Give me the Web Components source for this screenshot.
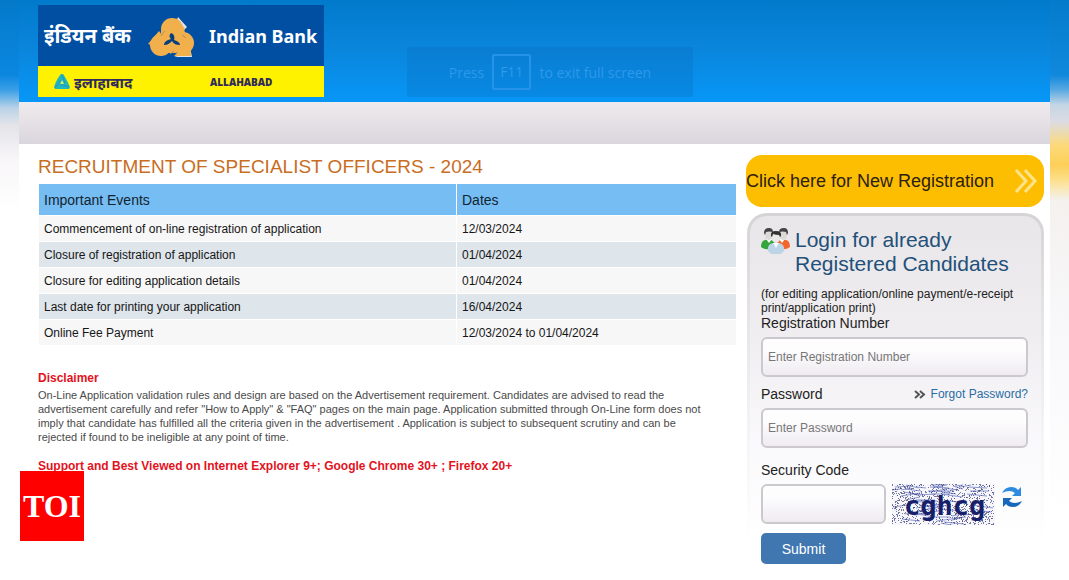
<!DOCTYPE html>
<html lang="en">
<head>
<meta charset="utf-8">
<title>Recruitment of Specialist Officers - 2024</title>
<style>
body { margin: 0; background: #fff; color: #222; font-family: "Liberation Sans", Arial, sans-serif; }
</style>
</head>
<body>
<recruitment-page></recruitment-page>

<script>
const define = (name, html, setup) => {
  const template = document.createElement('template');
  template.innerHTML = html;
  customElements.define(name, class extends HTMLElement {
    constructor() {
      super();
      this.attachShadow({ mode: 'open' }).append(template.content.cloneNode(true));
    }
    connectedCallback() { if (setup) setup(this, this.shadowRoot); }
  });
};

define('bank-logo', `
<style>
:host { display: block; width: 286px; color: #fff; font-family: "Noto Sans", "Noto Sans Devanagari", sans-serif; font-weight: 700; }
.top, .bottom { display: grid; grid-template-columns: 106px 65px 1fr; align-items: center; white-space: nowrap; }
.top { height: 61px; background: #004fa2; font-size: 18px; }
.bottom { height: 31px; background: #fff200; color: #2f2b5c; }
.hi { padding-left: 6px; font-size: 20px; }
.old { grid-column: 1 / 3; display: flex; align-items: center; gap: 4px; padding-left: 16px; font-size: 15px; }
.alla { font-size: 10px; font-family: "Open Sans", sans-serif; font-weight: 800; padding-left: 1px; }
svg { display: block; }
</style>
<div class="top">
  <span class="hi" lang="hi">इंडियन बैंक</span>
  <svg width="52" height="44" viewBox="0 0 52 44">
    <g fill="#dfe5ea"><path d="M34 3l9 10-4 4-7-8zM47 38l1 5H30z"/></g>
    <g fill="#f2b04c">
      <circle cx="28" cy="15" r="11"/><circle cx="17" cy="31" r="11"/><circle cx="39" cy="29" r="11"/>
      <path d="M18 14l20-2 6 12v10l-12 5H18l-4-9z"/>
      <path d="M33 4l8 11-2 4H27zM4 30l11-13 8 12-9 4zM33 30l14 6v6H30l4-4z"/>
    </g>
    <path d="M27 19c3 1 4 4 3 7 4 1 6 3 6 5-4 0-6-1-8-4-2 2-4 4-8 4 0-3 3-5 7-6-2-2-2-4 0-6z" fill="#063f7e"/>
    <path d="M17 22q1-3 4-5M26 40l4-3M38 21l4 3" stroke="#b98a50" fill="none"/>
  </svg>
  <span>Indian Bank</span>
</div>
<div class="bottom">
  <span class="old" lang="hi">
    <svg width="16" height="15" viewBox="0 0 16 15"><path d="M7 0h2q3 4 7 13l-1 2H1l-1-2Q3 4 7 0z" fill="#21b6bd"/><path d="M8 6l2 4H6z" fill="#d3f06a"/><path d="M8 1l3 8M1 14l6-8M15 13l-9-3" fill="none" stroke="#1686b0" stroke-opacity=".6"/></svg>
    इलाहाबाद
  </span>
  <span class="alla">ALLAHABAD</span>
</div>`);

define('fullscreen-hint', `
<style>
:host { display: flex; align-items: center; justify-content: center; gap: 8px; width: 286px; height: 50px;
  background: rgba(10, 110, 190, .3); color: #2f99ea; font: 14px "Open Sans", sans-serif; white-space: nowrap; }
kbd { font: inherit; border: 2px solid #2593ea; border-radius: 2px; padding: 6px; line-height: 20px; }
</style>
<span>Press</span><kbd>F11</kbd><span>to exit full screen</span>`);

define('site-header', `
<style>
:host { display: block; position: relative; }
.banner { height: 97px; padding: 5px 19px 0; background: linear-gradient(#017acb, #0a86dd 50%, #0797f7); }
.bar { height: 42px; background: linear-gradient(#efebed, #dad6dd); }
fullscreen-hint { position: absolute; left: 388px; top: 47px; }
</style>
<div class="banner"><bank-logo></bank-logo></div>
<div class="bar"></div>
<fullscreen-hint></fullscreen-hint>`);

define('events-table', `
<style>
:host { display: block; }
table { width: 100%; border-spacing: 1px; table-layout: fixed; font-size: 12px; color: #161616; }
th { background: #76bdf3; font-size: 14px; font-weight: 400; height: 31px; color: #122431; }
td { height: 25px; background: #f7f7f8; }
th, td { padding: 0 5px; text-align: left; }
th:first-child { width: 407px; }
tr:nth-child(even) td { background: #dee5eb; }
</style>
<table>
  <thead><tr><th scope="col">Important Events</th><th scope="col">Dates</th></tr></thead>
  <tbody>
    <tr><td>Commencement of on-line registration of application</td><td>12/03/2024</td></tr>
    <tr><td>Closure of registration of application</td><td>01/04/2024</td></tr>
    <tr><td>Closure for editing application details</td><td>01/04/2024</td></tr>
    <tr><td>Last date for printing your application</td><td>16/04/2024</td></tr>
    <tr><td>Online Fee Payment</td><td>12/03/2024 to 01/04/2024</td></tr>
  </tbody>
</table>`);

define('disclaimer-note', `
<style>
:host { display: block; font-size: 12px; }
h2 { margin: 0; font-size: 12px; line-height: 20px; color: #e3131d; }
p { margin: 0; padding-right: 24px; font-size: 11px; line-height: 14px; color: #4a4a4a; }
strong { display: block; margin-top: 15px; line-height: 14px; color: #e3131d; }
</style>
<h2>Disclaimer</h2>
<p>On-Line Application validation rules and design are based on the Advertisement requirement. Candidates are advised to read the advertisement carefully and refer "How to Apply" &amp; "FAQ" pages on the main page. Application submitted through On-Line form does not imply that candidate has fulfilled all the criteria given in the advertisement . Application is subject to subsequent scrutiny and can be rejected if found to be ineligible at any point of time.</p>
<strong>Support and Best Viewed on Internet Explorer 9+; Google Chrome 30+ ; Firefox 20+</strong>`);

define('register-link', `
<style>
:host { display: block; }
a { display: flex; align-items: center; justify-content: space-between; height: 52px; padding-right: 6px; border-radius: 16px;
  background: #fdbe02; color: #2b2110; font-size: 18px; text-decoration: none; white-space: nowrap; }
</style>
<a href="#register"><span><slot></slot></span>
<svg width="24" height="24" viewBox="0 0 24 24" fill="none" stroke="#ffe38c" stroke-width="3"><path d="M2 1l10 11L2 23M11 1l10 11-10 11"/></svg></a>`);

define('text-field', `
<style>
:host { display: block; }
.head { display: flex; justify-content: space-between; align-items: center; line-height: 17px; }
label { font-size: 14px; color: #222; }
.row { display: flex; gap: 6px; margin-top: 5px; }
input { box-sizing: border-box; width: 100%; height: 40px; padding: 0 5px; border: 2px solid #cbc8ce; border-radius: 6px;
  background: linear-gradient(#fefdfe 30%, #efebf1); font: 12px "Liberation Sans", Arial, sans-serif; }
input::placeholder { color: #777; opacity: 1; }
:host([short]) input { width: 125px; flex: none; }
</style>
<div class="head"><label for="field"></label><slot name="aside"></slot></div>
<div class="row"><input id="field"><slot></slot></div>`, (host, root) => {
  root.querySelector('label').textContent = host.getAttribute('label');
  const input = root.querySelector('input');
  input.type = host.getAttribute('type') || 'text';
  input.placeholder = host.getAttribute('placeholder') || '';
});

define('captcha-code', `
<style>
:host { display: block; flex: none; width: 103px; height: 41px; }
text { font: 700 27px "DejaVu Sans Mono", monospace; fill: #171f6b; }
</style>
<svg width="103" height="41" viewBox="0 0 103 41">
  <rect width="103" height="41" fill="#f6f6fb"/>
  <g id="noise" fill="none"></g>
  <text x="12" y="31">cghcg</text>
</svg>`, (host, root) => {
  let seed = 7;
  const rnd = () => (seed = (seed * 16807) % 2147483647) / 2147483647;
  let dots = '', lines = '';
  for (let i = 0; i < 900; i++) dots += 'M' + Math.floor(rnd() * 102) + ' ' + (Math.floor(rnd() * 41) + 0.5) + 'h1';
  for (let i = 0; i < 60; i++) lines += 'M' + Math.floor(rnd() * 85) + ' ' + Math.floor(rnd() * 40) + 'l' + Math.floor(8 + rnd() * 14) + ' ' + Math.floor(rnd() * 7 - 3);
  root.getElementById('noise').innerHTML = '<path stroke="#8d98d0" d="' + lines + '"/><path stroke="#3f4478" stroke-opacity=".7" d="' + dots + '"/>';
});

define('login-panel', `
<style>
:host { display: block; padding: 3px 3px 0; border-radius: 20px 20px 0 0; background: linear-gradient(#d5d3d6, #e6e4e7 30%, #f6f5f7 65%, #fff 90%); }
form { padding: 12px 13px 12px 11px; border-radius: 17px 17px 0 0; background: linear-gradient(#e8e6e8, #f0eef1 35%, #faf9fb 65%, #fff 90%); }
.title { display: grid; grid-template-columns: 29px 1fr; gap: 5px; }
h2 { margin: 0; font-size: 21px; line-height: 24px; font-weight: 400; color: #22507a; white-space: nowrap; }
p { margin: 11px 0 0; font-size: 12px; line-height: 14px; color: #222; }
a { display: flex; align-items: center; gap: 5px; font-size: 12px; color: #2a6da5; text-decoration: none; white-space: nowrap; }
.pw { margin-top: 9px; }
.code { margin-top: 14px; }
.refresh { flex: none; align-self: flex-start; margin: 2px 0 0; padding: 0; border: 0; background: none; }
.refresh svg { display: block; }
.submit { margin-top: 8px; width: 85px; height: 31px; border: 0; border-radius: 5px; background: #4077b0; color: #fff; font: 14px "Liberation Sans", Arial, sans-serif; }
</style>
<form>
  <div class="title">
    <svg width="29" height="26" viewBox="0 0 29 26">
      <path d="M0 19q0-6 4-7l4-1 6 3-4 7q-6 1-10-2z" fill="#35a63b"/><path d="M29 19q0-6-4-7l-4-1-6 3 4 7q6 1 10-2z" fill="#f2662a"/>
      <path d="M5 11l3 4 3-4zM18 11l3 4 3-4z" fill="#fff"/>
      <ellipse cx="8" cy="7" rx="4" ry="5" fill="#dcdad9"/><ellipse cx="22" cy="7" rx="4" ry="5" fill="#dcdad9"/>
      <path d="M3 5Q3 0 8 0q4 0 4 4-4-1-7 0l-1 3zM18 4q0-4 5-4 4 0 4 5l-1 2-1-3q-3-1-7 0z" fill="#444"/>
      <path d="M7 23q-1-7 5-8l3-1 3 1q6 1 5 8-3 4-8 4t-8-4z" fill="#bcd5e6"/><path d="M12 15l3 5 3-5z" fill="#f5fafc"/>
      <ellipse cx="15" cy="10" rx="4" ry="5" fill="#eae7e5"/>
      <path d="M10 8q-1-5 5-5 6 0 5 5l-1 1-1-2q-3 0-6-1l-1 3z" fill="#333"/>
    </svg>
    <h2>Login for already<br>Registered Candidates</h2>
  </div>
  <p>(for editing application/online payment/e-receipt print/application print)</p>
  <text-field label="Registration Number" placeholder="Enter Registration Number"></text-field>
  <text-field class="pw" label="Password" type="password" placeholder="Enter Password">
    <a slot="aside" href="#forgot"><svg width="12" height="9" viewBox="0 0 12 9" fill="none" stroke="#555" stroke-width="2"><path d="M1 1l4 3.500-4 3.500M6 1l4 3.500-4 3.500"/></svg>Forgot Password?</a>
  </text-field>
  <text-field class="code" label="Security Code" short>
    <captcha-code></captcha-code>
    <button class="refresh" type="button" aria-label="Refresh code">
      <svg width="22" height="22" viewBox="0 0 22 22">
        <path d="M1 7Q4 1 10 1q5 0 7 3l3-3v9h-9l3-3Q9 3 1 7z" fill="#2d8be0"/>
        <path d="M21 15q-3 6-9 6-5 0-7-3l-3 3v-9h9l-3 3q5 4 13 0z" fill="#1669bd"/>
      </svg>
    </button>
  </text-field>
  <button class="submit" type="button">Submit</button>
</form>`);

define('toi-badge', `
<style>
:host { display: flex; align-items: center; justify-content: center; width: 64px; height: 70px; background: #fe0000; color: #fff; font: 700 32px "Liberation Serif", serif; }
</style>TOI`);

define('recruitment-page', `
<style>
:host { display: grid; grid-template-columns: 19px 1fr 19px; min-height: 100vh; }
.edge.l { background: linear-gradient(#0479c9, #0b87e0 75px, #3b9fe6 90px, #b9d3e8 108px, #e4e3e8 125px, #f8f6f8 160px, #fff 210px); }
.edge.r { background: linear-gradient(#047bcb, #1088dc 75px, #5aa9e2 90px, #c5d6e5 105px, #dcdce2 122px, #fcd97a 145px, #fccf58 165px, #fde08c 180px, #f4f1ee 200px, #f8f8fb 330px, #fff 520px); }
main { position: relative; min-width: 0; }
.columns { display: grid; grid-template-columns: minmax(0, 1fr) 298px; gap: 9px; padding: 11px 6px 0 19px; }
h1 { margin: 0 0 4px; font-size: 19px; line-height: 24px; font-weight: 400; color: #c96d1f; }
disclaimer-note { margin: 22px 0 0; }
login-panel { margin: 6px 0 0 1px; }
toi-badge { position: absolute; left: 1px; top: 471px; }
</style>
<div class="edge l"></div>
<main>
  <site-header></site-header>
  <div class="columns">
    <section>
      <h1>RECRUITMENT OF SPECIALIST OFFICERS - 2024</h1>
      <events-table></events-table>
      <disclaimer-note></disclaimer-note>
    </section>
    <aside>
      <register-link>Click here for New Registration</register-link>
      <login-panel></login-panel>
    </aside>
  </div>
  <toi-badge></toi-badge>
</main>
<div class="edge r"></div>`);
</script>
</body>
</html>
